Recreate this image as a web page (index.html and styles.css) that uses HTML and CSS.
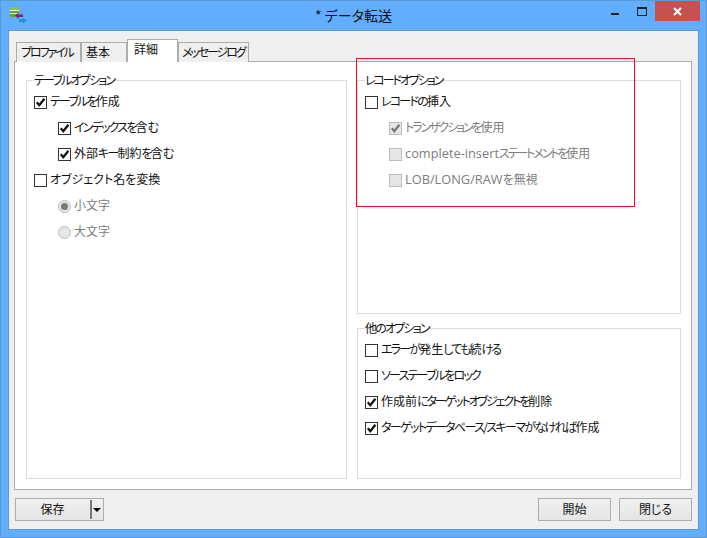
FILE: index.html
```html
<!DOCTYPE html>
<html lang="ja">
<head>
<meta charset="utf-8">
<title>データ転送</title>
<link rel="stylesheet" href="styles.css">
</head>
<body>
<svg class="sprites" width="0" height="0" aria-hidden="true">
  <symbol id="check" viewBox="0 0 11 11"><path d="M1.800 5.300 4.300 8.200 9.400 1.800" fill="none" stroke="currentColor" stroke-width="2.300"/></symbol>
</svg>
<div class="window">
  <header class="titlebar">
    <svg class="app-icon" width="18" height="18" viewBox="0 0 18 18">
      <rect x="0" y="0" width="9" height="3" rx="1.200" fill="#8cc63f"/>
      <rect x="0" y="3" width="9" height="1" fill="#fff"/>
      <rect x="0" y="4" width="9" height="2" fill="#5aa92f"/>
      <rect x="0" y="6" width="9" height="1" fill="#d9eec0"/>
      <rect x="0" y="7" width="8" height="3" rx="1" fill="#5aa92f"/>
      <path d="M5 8.500 8.500 5.500V7.500H13V10H8.500V12Z" fill="#8a1f6f"/>
      <path d="M17 13.500 13 10.500V12H9V15H13V16.500Z" fill="#1b97c4"/>
    </svg>
    <div class="title">* データ転送</div>
    <div class="controls">
      <span class="min"></span>
      <span class="max"></span>
      <span class="close"><svg width="9" height="9" viewBox="0 0 9 9"><path d="M1 1 8 8M8 1 1 8" stroke="#fff" stroke-width="2.200"/></svg></span>
    </div>
  </header>
  <main class="client">
    <nav class="tabs">
      <span class="tab tab-profile"><span class="k2">プロファイル</span></span>
      <span class="tab tab-basic">基本</span>
      <span class="tab active">詳細</span>
      <span class="tab tab-log"><span class="k2">メッセージログ</span></span>
    </nav>
    <section class="pane">
      <div class="group group-left">
        <div class="legend"><span class="k">テーブルオプション</span></div>
        <label class="row"><i class="cb"><svg><use href="#check"/></svg></i><span><span class="k">テーブルを</span>作成</span></label>
        <label class="row sub"><i class="cb"><svg><use href="#check"/></svg></i><span><span class="k">インデックスを</span>含<span class="k">む</span></span></label>
        <label class="row sub"><i class="cb"><svg><use href="#check"/></svg></i><span>外部<span class="k">キー</span>制約<span class="k">を</span>含<span class="k">む</span></span></label>
        <label class="row"><i class="cb"></i><span>オブジェクト名を変換</span></label>
        <label class="row sub off"><i class="rb on"></i><span>小文字</span></label>
        <label class="row sub off"><i class="rb"></i><span>大文字</span></label>
      </div>
      <div class="col-right">
        <div class="group group-top">
          <div class="legend"><span class="k2">レコードオプション</span></div>
          <label class="row"><i class="cb"></i><span><span class="k">レコードの</span>挿入</span></label>
          <label class="row sub off"><i class="cb"><svg><use href="#check"/></svg></i><span><span class="k2">トランザクションを</span>使用</span></label>
          <label class="row sub off"><i class="cb"></i><span><span class="latin">complete-insert</span><span class="k2">ステートメントを</span>使用</span></label>
          <label class="row sub off"><i class="cb"></i><span><span class="latin">LOB/LONG/RAW</span>を無視</span></label>
        </div>
        <div class="group group-bottom">
          <div class="legend"><span class="k">他のオプション</span></div>
          <label class="row"><i class="cb"></i><span><span class="k">エラーが</span>発生<span class="k">しても</span>続<span class="k">ける</span></span></label>
          <label class="row"><i class="cb"></i><span><span class="k">ソーステーブルをロック</span></span></label>
          <label class="row"><i class="cb"><svg><use href="#check"/></svg></i><span>作成前<span class="k2">にターゲットオブジェクトを</span>削除</span></label>
          <label class="row"><i class="cb"><svg><use href="#check"/></svg></i><span><span class="k4">ターゲットデータベース/スキーマがなければ</span>作成</span></label>
        </div>
      </div>
    </section>
    <footer class="actions">
      <button class="btn save"><span class="save-label">保存</span><span class="divider"></span><span class="arrow"></span></button>
      <span class="spacer"></span>
      <button class="btn">開始</button>
      <button class="btn">閉じる</button>
    </footer>
  </main>
  <div class="highlight"></div>
</div>
</body>
</html>
```

FILE: styles.css
```css
* { box-sizing: border-box; }
html, body { margin: 0; padding: 0; }
body {
  width: 707px;
  height: 538px;
  overflow: hidden;
  font-family: "Noto Sans CJK JP", "Noto Sans", sans-serif;
  font-size: 12px;
  font-feature-settings: "palt";
  color: #111;
}
.k { letter-spacing: -1.8px; }
.k2 { letter-spacing: -2.1px; }
.k4 { letter-spacing: -1.650px; }
.latin { font-family: "Open Sans", "Noto Sans", sans-serif; font-size: 12.800px; }
.sprites { position: absolute; }
.window {
  position: relative;
  width: 707px;
  height: 538px;
  background: #61aeff;
  border: 1px solid #5a9bd6;
  display: flex;
  flex-direction: column;
}
.titlebar {
  height: 29px;
  flex: none;
  display: flex;
  position: relative;
  padding: 6px 0 0 9px;
}
.app-icon { flex: none; }
.title {
  flex: 1;
  text-align: center;
  font-size: 14px;
  line-height: 20px;
  margin: -2px 0 0 -27px;
  white-space: nowrap;
}
.controls {
  position: absolute;
  right: 6px;
  top: 0;
  height: 20px;
  display: flex;
}
.min { width: 8px; height: 2px; background: #222; margin: 12px 18px 0 0; }
.max { width: 10px; height: 9px; border: 1px solid #222; border-top-width: 2px; margin: 6px 8px 0 0; }
.close {
  width: 45px;
  height: 20px;
  background: #c75050;
  display: flex;
  align-items: center;
  justify-content: center;
}
.client {
  margin: 0 7px 6px 7px;
  height: 500px;
  flex: none;
  background: #efefef;
  border: 1px solid #5a9bd6;
  padding: 9px 6px 0 5px;
  display: flex;
  flex-direction: column;
}
.tabs {
  height: 22px;
  flex: none;
  display: flex;
  align-items: flex-end;
  padding-left: 2px;
  position: relative;
  z-index: 1;
  margin-bottom: -1px;
  white-space: nowrap;
}
.tab {
  height: 20px;
  border: 1px solid #acacac;
  border-bottom: none;
  background: #efefef;
  text-align: left;
  line-height: 17px;
}
.tab-profile { width: 65px; padding-left: 4px; }
.tab-basic { width: 46px; padding-left: 4px; }
.tab-log { width: 71px; padding-left: 3px; }
.tab.active {
  height: 23px;
  width: 51px;
  background: #fff;
  line-height: 18px;
  padding-left: 6px;
}
.pane {
  width: 678px;
  height: 429px;
  flex: none;
  background: #fff;
  border: 1px solid #acacac;
  padding: 18px 10px 10px 11px;
  display: flex;
  gap: 10px;
}
.group {
  border: 1px solid #dcdcdc;
  padding: 0 7px 0 7px;
  background: #fff;
}
.group-left { width: 321px; height: 399px; }
.col-right { width: 324px; display: flex; flex-direction: column; gap: 14px; }
.group-top { height: 234px; }
.group-bottom { height: 151px; }
.legend {
  height: 16px;
  margin-top: -9px;
  line-height: 16px;
  background: #fff;
  width: max-content;
  margin-bottom: 1px;
}
.row {
  height: 26px;
  display: flex;
  align-items: center;
  gap: 3px;
  white-space: nowrap;
}
.row > span { margin-top: -3px; }
.sub { padding-left: 24px; }
.off { color: #7d7d7d; }
.cb {
  width: 13px;
  height: 13px;
  flex: none;
  border: 1px solid #333;
  background: #fff;
  color: #111;
  display: block;
}
.cb svg { width: 11px; height: 11px; display: block; }
.off .cb { border-color: #bcbcbc; background: #e6e6e6; color: #777; }
.rb {
  width: 13px;
  height: 13px;
  flex: none;
  border: 1px solid #bcbcbc;
  border-radius: 50%;
  background: #e6e6e6;
  display: flex;
  align-items: center;
  justify-content: center;
}
.rb.on::after {
  content: "";
  width: 7px;
  height: 7px;
  border-radius: 50%;
  background: #777;
}
.actions {
  flex: 1;
  display: flex;
  gap: 8px;
  padding: 8px 0 8px 1px;
}
.spacer { flex: 1; }
.btn {
  width: 73px;
  height: 23px;
  border: 1px solid #acacac;
  background: linear-gradient(#f0f0f0, #e5e5e5);
  font: inherit;
  color: #111;
  padding: 0 0 2px;
  line-height: 18px;
}
.save {
  width: 89px;
  display: flex;
  align-items: center;
  padding: 0;
}
.save-label { width: 73px; text-align: center; margin-top: -2px; }
.divider { width: 2px; height: 19px; background: #777; flex: none; margin-left: 1px; }
.arrow {
  width: 0;
  height: 0;
  margin-left: 1px;
  border-left: 4.500px solid transparent;
  border-right: 4.500px solid transparent;
  border-top: 4.500px solid #000;
}
.highlight {
  position: absolute;
  left: 355px;
  top: 57px;
  width: 279px;
  height: 149px;
  border: 1px solid #f01020;
  pointer-events: none;
}
```
